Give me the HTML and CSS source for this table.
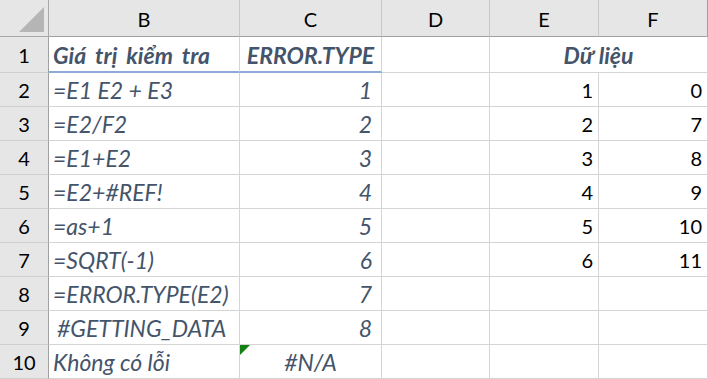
FILE: index.html
```html
<!DOCTYPE html>
<html lang="vi">
<head>
<meta charset="utf-8">
<title>ERROR.TYPE</title>
<link rel="stylesheet" href="styles.css">
</head>
<body>
<div class="sheet">
  <div class="corner"><svg class="tri" width="25" height="25" viewBox="0 0 25 25"><polygon points="25,0 25,25 0,25" fill="#b5b5b5"/></svg></div>
  <div class="colhdr">B</div>
  <div class="colhdr">C</div>
  <div class="colhdr">D</div>
  <div class="colhdr">E</div>
  <div class="colhdr last">F</div>

  <div class="rowhdr">1</div>
  <div class="cell txt bold blue-b wide">Giá trị kiểm tra</div>
  <div class="cell txt bold center blue-b">ERROR.TYPE</div>
  <div class="cell"></div>
  <div class="cell txt bold center merged">Dữ liệu</div>

  <div class="rowhdr">2</div>
  <div class="cell txt">=E1 E2 + E3</div>
  <div class="cell txt num">1</div>
  <div class="cell"></div>
  <div class="cell val">1</div>
  <div class="cell val">0</div>

  <div class="rowhdr">3</div>
  <div class="cell txt">=E2/F2</div>
  <div class="cell txt num">2</div>
  <div class="cell"></div>
  <div class="cell val">2</div>
  <div class="cell val">7</div>

  <div class="rowhdr">4</div>
  <div class="cell txt">=E1+E2</div>
  <div class="cell txt num">3</div>
  <div class="cell"></div>
  <div class="cell val">3</div>
  <div class="cell val">8</div>

  <div class="rowhdr">5</div>
  <div class="cell txt">=E2+#REF!</div>
  <div class="cell txt num">4</div>
  <div class="cell"></div>
  <div class="cell val">4</div>
  <div class="cell val">9</div>

  <div class="rowhdr">6</div>
  <div class="cell txt">=as+1</div>
  <div class="cell txt num">5</div>
  <div class="cell"></div>
  <div class="cell val">5</div>
  <div class="cell val">10</div>

  <div class="rowhdr">7</div>
  <div class="cell txt">=SQRT(-1)</div>
  <div class="cell txt num">6</div>
  <div class="cell"></div>
  <div class="cell val">6</div>
  <div class="cell val">11</div>

  <div class="rowhdr">8</div>
  <div class="cell txt">=ERROR.TYPE(E2)</div>
  <div class="cell txt num">7</div>
  <div class="cell"></div>
  <div class="cell"></div>
  <div class="cell"></div>

  <div class="rowhdr">9</div>
  <div class="cell txt indent">#GETTING_DATA</div>
  <div class="cell txt num">8</div>
  <div class="cell"></div>
  <div class="cell"></div>
  <div class="cell"></div>

  <div class="rowhdr">10</div>
  <div class="cell txt">Không có lỗi</div>
  <div class="cell txt center flagged">#N/A<span class="flag"></span></div>
  <div class="cell"></div>
  <div class="cell"></div>
  <div class="cell"></div>
</div>
</body>
</html>
```
FILE: styles.css
```css
* { box-sizing: border-box; }
html, body { margin: 0; padding: 0; background: #ffffff; }
body { font-family: Lato, "Open Sans", sans-serif; }

.sheet {
  display: grid;
  grid-template-columns: 49px 191px 142px 108px 109px 109px;
  grid-template-rows: 37px 36px repeat(9, 34px);
  width: 708px;
}

.corner {
  background: #e6e6e6;
  border-right: 1px solid #a8a8a8;
  border-bottom: 1px solid #a8a8a8;
  display: flex;
  align-items: flex-end;
  justify-content: flex-end;
  padding: 0 4px 4px 0;
}
.tri { display: block; }

.colhdr {
  background: #e6e6e6;
  border-right: 1px solid #c8c8c8;
  border-bottom: 1px solid #a0a0a0;
  display: flex;
  align-items: center;
  justify-content: center;
  font-size: 20px;
  color: #000;
  padding-top: 2px;
}
.colhdr.last { border-right-color: #a0a0a0; }

.rowhdr {
  background: #e6e6e6;
  border-right: 1px solid #a0a0a0;
  border-bottom: 1px solid #cfcfcf;
  display: flex;
  align-items: center;
  justify-content: center;
  font-size: 20px;
  color: #000;
  padding-top: 1px;
}

.cell {
  position: relative;
  border-right: 1px solid #d4d4d4;
  border-bottom: 1px solid #d4d4d4;
  display: flex;
  align-items: center;
  padding: 1px 4px 0 4px;
  font-size: 20px;
  white-space: nowrap;
}

.txt { color: #44546a; font-style: italic; font-size: 23px; }
.bold { font-weight: 700; }
.wide { word-spacing: 4px; }
.center { justify-content: center; }
.num { justify-content: flex-end; padding-right: 9px; }
.val { justify-content: flex-end; color: #000; padding-right: 5px; }
.indent { padding-left: 8px; }
.merged { grid-column: span 2; }
.blue-b { border-bottom: 2px solid #8eaadb; }

.flag {
  position: absolute;
  left: 0;
  top: 0;
  width: 0;
  height: 0;
  border-top: 10px solid #118011;
  border-right: 10px solid transparent;
}
```
